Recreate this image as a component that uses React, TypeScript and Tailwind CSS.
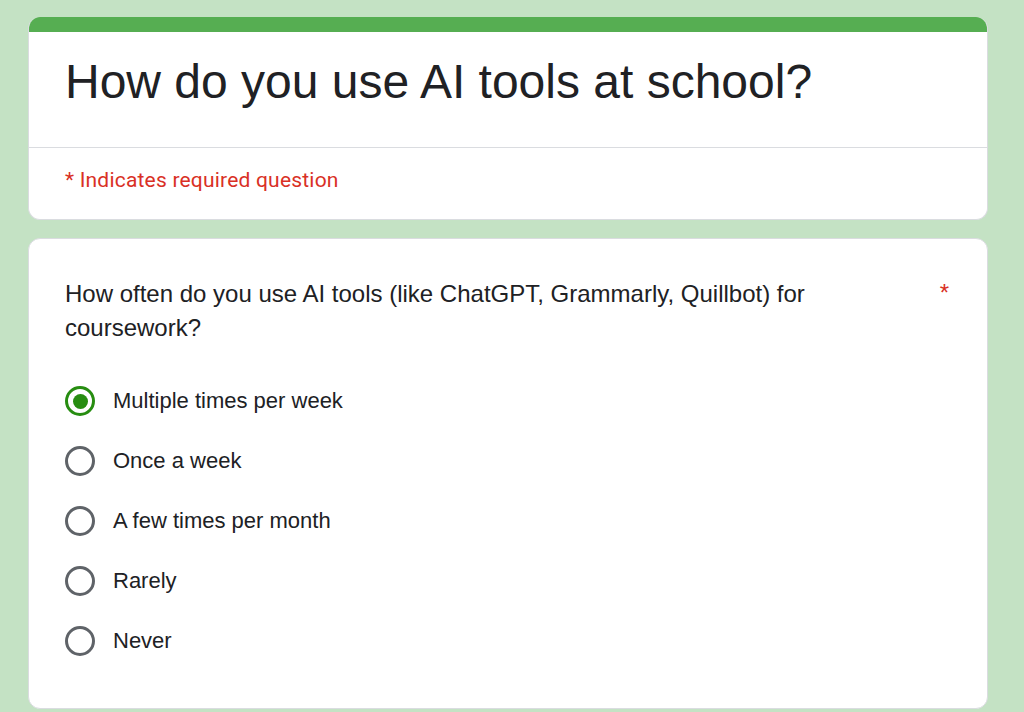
import React, { useState } from 'react';

const OPTIONS = [
  'Multiple times per week',
  'Once a week',
  'A few times per month',
  'Rarely',
  'Never',
];

function Radio({ checked }: { checked: boolean }) {
  return (
    <span
      className={`flex h-[30px] w-[30px] shrink-0 items-center justify-center rounded-full border-[3px] ${
        checked ? 'border-[#278d11]' : 'border-[#5f6368]'
      }`}
    >
      {checked && <span className="h-[15px] w-[15px] rounded-full bg-[#278d11]" />}
    </span>
  );
}

export default function App() {
  const [choice, setChoice] = useState(0);

  return (
    <div className="min-h-screen bg-[#c4e2c4] pl-[28px] pt-[17px] pb-6 font-['Liberation_Sans',Arial,sans-serif] text-[#202124]">
      <div className="w-[960px]">
        {/* Header card */}
        <div className="overflow-hidden rounded-[12px] border border-t-0 border-[#dadce0] bg-white">
          <div className="h-[15px] bg-[#56ae52]" />
          <div className="border-b border-[#dadce0] px-[36px] pt-[18px] pb-[33px]">
            <h1 className="text-[48px] leading-[64px]">How do you use AI tools at school?</h1>
          </div>
          <div className="px-[36px] pt-[18px] pb-[25px] font-['Roboto',sans-serif] text-[21px] leading-[28px] tracking-[0.2px] text-[#d93025]">
            * Indicates required question
          </div>
        </div>

        {/* Question card */}
        <div className="mt-[18px] rounded-[12px] border border-[#dadce0] bg-white px-[36px] pt-[38px] pb-[52px]">
          <div className="flex items-start justify-between">
            <div className="w-[790px] text-[24px] leading-[34px]">
              How often do you use AI tools (like ChatGPT, Grammarly, Quillbot) for coursework?
            </div>
            <span className="-mt-[1px] pr-[2px] text-[24px] leading-[34px] text-[#d93025]">*</span>
          </div>
          <div className="mt-[41px] flex flex-col gap-[30px]">
            {OPTIONS.map((opt, i) => (
              <button
                key={opt}
                onClick={() => setChoice(i)}
                className="flex items-center gap-[18px] text-left"
              >
                <Radio checked={choice === i} />
                <span className="text-[22px] leading-[30px]">{opt}</span>
              </button>
            ))}
          </div>
        </div>
      </div>
    </div>
  );
}
